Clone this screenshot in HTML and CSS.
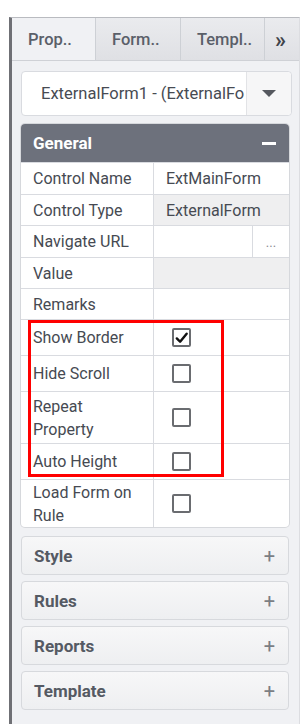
FILE: index.html
```html
<!DOCTYPE html>
<html lang="en">
<head>
  <meta charset="UTF-8">
  <title>Properties</title>
  <link rel="stylesheet" href="styles.css">
</head>
<body>
  <div class="pane">
    <div class="tabs">
      <div class="tab active">Prop..</div>
      <div class="tab">Form..</div>
      <div class="tab">Templ..</div>
      <div class="tab more">&raquo;</div>
    </div>

    <div class="content">
      <div class="select">
        <div class="select-text">ExternalForm1 - (ExternalFo</div>
        <div class="select-btn"><span class="caret"></span></div>
      </div>

      <div class="group">
        <div class="group-head">
          <span>General</span>
          <span class="minus"></span>
        </div>
        <div class="row h32">
          <div class="label">Control Name</div>
          <div class="value">ExtMainForm</div>
        </div>
        <div class="row h31">
          <div class="label">Control Type</div>
          <div class="value grey">ExternalForm</div>
        </div>
        <div class="row h32">
          <div class="label">Navigate URL</div>
          <div class="value split">
            <div class="input"></div>
            <div class="dots">...</div>
          </div>
        </div>
        <div class="row h31">
          <div class="label">Value</div>
          <div class="value grey"></div>
        </div>
        <div class="row h31">
          <div class="label">Remarks</div>
          <div class="value"></div>
        </div>
        <div class="row h36">
          <div class="label">Show Border</div>
          <div class="value"><span class="check on">
            <svg width="16" height="16" viewBox="0 0 16 16"><path d="M3 8.5 L6.5 12 L13.5 3.5" fill="none" stroke="#111" stroke-width="2.6" stroke-linecap="round" stroke-linejoin="round"/></svg>
          </span></div>
        </div>
        <div class="row h36">
          <div class="label">Hide Scroll</div>
          <div class="value"><span class="check"></span></div>
        </div>
        <div class="row h52">
          <div class="label">Repeat<br>Property</div>
          <div class="value"><span class="check"></span></div>
        </div>
        <div class="row h36">
          <div class="label">Auto Height</div>
          <div class="value"><span class="check"></span></div>
        </div>
        <div class="row h48 last">
          <div class="label">Load Form on<br>Rule</div>
          <div class="value"><span class="check"></span></div>
        </div>
      </div>

      <div class="section"><span>Style</span><span class="plus">+</span></div>
      <div class="section"><span>Rules</span><span class="plus">+</span></div>
      <div class="section"><span>Reports</span><span class="plus">+</span></div>
      <div class="section"><span>Template</span><span class="plus">+</span></div>
    </div>
  </div>

  <div class="highlight"></div>
</body>
</html>
```

FILE: styles.css
```css
body {
  margin: 0;
  padding-top: 17px;
  background: #fff;
  font-family: Roboto, "Liberation Sans", sans-serif;
  color: #464a52;
  position: relative;
  height: 707px;
  overflow: hidden;
}
.pane {
  margin-left: 9px;
  width: 287px;
  height: 707px;
  border-left: 3px solid #6f7075;
  border-top: 1px solid #b9bbc0;
  border-right: 1px solid #dcdde1;
  background: #f0f1f4;
}
.tabs {
  display: flex;
  height: 42px;
  border-bottom: 1px solid #cfd1d6;
}
.tab {
  box-sizing: border-box;
  width: 85px;
  display: flex;
  align-items: center;
  padding-left: 16px;
  font-size: 16.5px;
  font-weight: 500;
  color: #5a5f69;
  background: linear-gradient(#eaebee, #dfe0e4);
  border-left: 1px solid #cdd0d5;
}
.tab.active {
  width: 83px;
  background: #f0f1f4;
  border-left: none;
}
.tab:nth-child(3) {
  width: 84px;
}
.tab.more {
  flex: 1;
  padding-left: 10px;
  font-size: 22px;
  font-weight: 700;
  color: #3f434a;
}
.content {
  padding: 10px 0 0 9px;
}
.select {
  box-sizing: border-box;
  width: 271px;
  height: 45px;
  display: flex;
  background: #fff;
  border: 1px solid #d9dbe0;
  border-radius: 4px;
}
.select-text {
  flex: 1;
  overflow: hidden;
  white-space: nowrap;
  padding-left: 19px;
  line-height: 43px;
  font-size: 16.5px;
  color: #474b53;
}
.select-btn {
  width: 44px;
  display: flex;
  align-items: center;
  justify-content: center;
  border-left: 1px solid #e2e3e6;
  background: #f6f6f7;
  border-radius: 0 4px 4px 0;
}
.caret {
  width: 0;
  height: 0;
  border-left: 7px solid transparent;
  border-right: 7px solid transparent;
  border-top: 7px solid #55585f;
}
.group {
  width: 268px;
  margin-top: 8px;
  background: #fff;
  border-radius: 4px;
  box-shadow: 0 0 0 1px #d6d8dc;
}
.group-head {
  height: 38px;
  display: flex;
  align-items: center;
  justify-content: space-between;
  padding: 0 12px;
  background: #6d717c;
  border-radius: 4px 4px 0 0;
  color: #fff;
  font-size: 17px;
  font-weight: 700;
}
.minus {
  width: 14px;
  height: 3px;
  background: #fff;
  margin-right: 1px;
}
.row {
  box-sizing: border-box;
  display: flex;
  border-top: 1px solid #d9dbe0;
  font-size: 16px;
}
.h31 { height: 31px; }
.h32 { height: 32px; }
.h36 { height: 36px; }
.h48 { height: 48px; }
.h52 { height: 52px; }
.label {
  box-sizing: border-box;
  width: 133px;
  display: flex;
  align-items: center;
  padding-left: 12px;
  line-height: 23px;
  border-right: 1px solid #d9dbe0;
  color: #464a52;
}
.value {
  flex: 1;
  display: flex;
  align-items: center;
  padding-left: 12px;
  color: #464a52;
}
.value.grey {
  background: #efeff0;
}
.value.split {
  padding-left: 0;
  align-items: stretch;
}
.split .input {
  flex: 1;
}
.split .dots {
  width: 36px;
  border-left: 1px solid #d9dbe0;
  text-align: center;
  font-size: 13px;
  color: #8a8d93;
  line-height: 34px;
}
.check {
  box-sizing: border-box;
  width: 19px;
  height: 19px;
  margin-left: 6px;
  border: 2px solid #6a6c70;
  border-radius: 2px;
  display: flex;
  align-items: center;
  justify-content: center;
  background: #fff;
}
.last {
  border-radius: 0 0 4px 4px;
}
.section {
  box-sizing: border-box;
  width: 268px;
  height: 39px;
  margin-top: 6px;
  display: flex;
  align-items: center;
  justify-content: space-between;
  padding: 0 13px 0 12px;
  background: linear-gradient(#f7f7f8, #eeeff1);
  border: 1px solid #d7d9dd;
  border-radius: 4px;
  font-size: 17px;
  font-weight: 700;
  color: #555a63;
}
.group + .section {
  margin-top: 9px;
}
.plus {
  font-weight: 400;
  font-size: 20px;
  color: #7b7e84;
}
.highlight {
  position: absolute;
  left: 28px;
  top: 320px;
  width: 190px;
  height: 151px;
  border: 3px solid #ff0000;
}
```
